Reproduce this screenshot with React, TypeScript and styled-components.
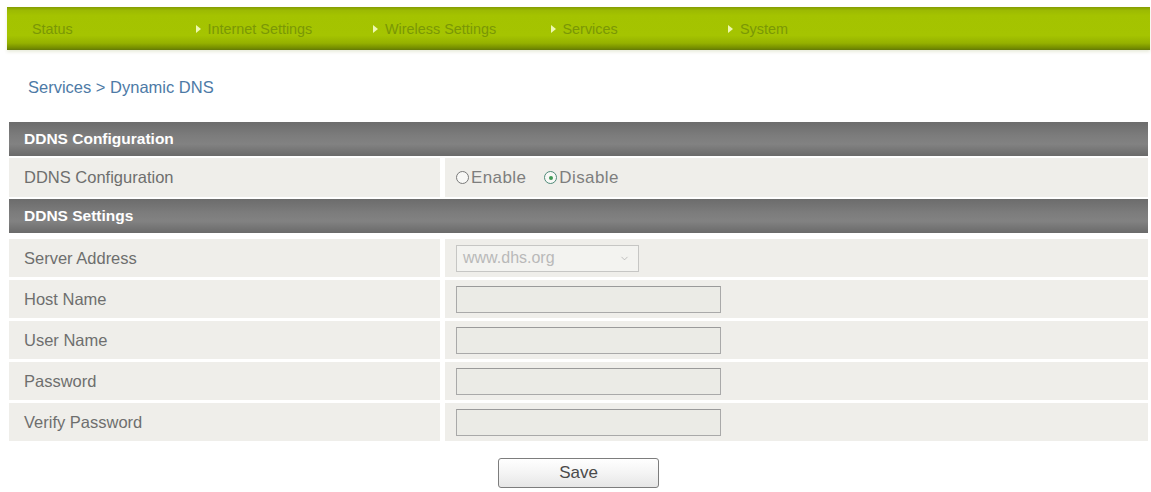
import React from 'react';
import styled, { createGlobalStyle } from 'styled-components';
import { ChevronDown } from 'lucide-react';

const GlobalStyle = createGlobalStyle`
    html, body {
        margin: 0;
        padding: 0;
        background: #ffffff;
        font-family: 'Liberation Sans', Arial, sans-serif;
    }
`;

const navItems = [
    { label: 'Status', arrow: false },
    { label: 'Internet Settings', arrow: true },
    { label: 'Wireless Settings', arrow: true },
    { label: 'Services', arrow: true },
    { label: 'System', arrow: true },
];

const settingsRows = ['Host Name', 'User Name', 'Password', 'Verify Password'];

const App: React.FC = () => {
    return (
        <>
            <GlobalStyle />
            <Page>
                <NavBar>
                    {navItems.map((item) => (
                        <NavItem key={item.label} $plain={!item.arrow}>
                            {item.arrow && <NavArrow />}
                            {item.label}
                        </NavItem>
                    ))}
                </NavBar>

                <Breadcrumb>Services &gt; Dynamic DNS</Breadcrumb>

                <Panel>
                    <SectionHeader>DDNS Configuration</SectionHeader>
                    <Row>
                        <LabelCell>DDNS Configuration</LabelCell>
                        <ValueCell>
                            <RadioOption>
                                <RadioDot $checked={false} />
                                Enable
                            </RadioOption>
                            <RadioOption>
                                <RadioDot $checked />
                                Disable
                            </RadioOption>
                        </ValueCell>
                    </Row>

                    <SectionHeader>DDNS Settings</SectionHeader>
                    <SettingsList>
                        <Row $compact>
                            <LabelCell>Server Address</LabelCell>
                            <ValueCell>
                                <FakeSelect>
                                    www.dhs.org
                                    <ChevronDown size={11} strokeWidth={1.5} color="#a8a8a8" />
                                </FakeSelect>
                            </ValueCell>
                        </Row>
                        {settingsRows.map((label) => (
                            <Row $compact key={label}>
                                <LabelCell>{label}</LabelCell>
                                <ValueCell>
                                    <TextField
                                        disabled
                                        type={label.includes('Password') ? 'password' : 'text'}
                                    />
                                </ValueCell>
                            </Row>
                        ))}
                    </SettingsList>

                    <Actions>
                        <SaveButton>Save</SaveButton>
                    </Actions>
                </Panel>
            </Page>
        </>
    );
};

const Page = styled.div`
    padding: 7px 1px 0 7px;
`;

const NavBar = styled.div`
    display: flex;
    align-items: center;
    height: 43px;
    padding-left: 11px;
    background: linear-gradient(
        to bottom,
        #849c02 0%,
        #9cba02 8%,
        #a4c300 20%,
        #a5c401 66%,
        #95b100 84%,
        #738b00 96%,
        #62780a 100%
    );
    box-shadow: 0 2px 3px rgba(170, 180, 120, 0.25);
`;

const NavItem = styled.div<{ $plain: boolean }>`
    display: flex;
    align-items: center;
    width: 177.5px;
    flex-shrink: 0;
    padding-left: ${(props) => (props.$plain ? '14px' : '0')};
    box-sizing: border-box;
    font-size: 14.4px;
    color: #7a9706;
    white-space: nowrap;
`;

const NavArrow = styled.span`
    width: 0;
    height: 0;
    margin-right: 7px;
    border-top: 4px solid transparent;
    border-bottom: 4px solid transparent;
    border-left: 5px solid #eef8b0;
`;

const Breadcrumb = styled.div`
    margin: 27px 0 0 21px;
    height: 20px;
    line-height: 20px;
    font-size: 16.5px;
    color: #4d7aa6;
`;

const Panel = styled.div`
    display: flex;
    flex-direction: column;
    gap: 2px;
    width: 1139px;
    margin: 25px 0 0 2px;
`;

const SectionHeader = styled.div`
    display: flex;
    align-items: center;
    height: 34px;
    padding-left: 15px;
    font-size: 15.5px;
    font-weight: bold;
    color: #ffffff;
    background: linear-gradient(to bottom, #6c6c6c 0%, #7c7c7c 40%, #828282 65%, #6a6a6a 100%);
`;

const SettingsList = styled.div`
    display: flex;
    flex-direction: column;
    gap: 3px;
    margin-top: 4px;
`;

const Row = styled.div<{ $compact?: boolean }>`
    display: grid;
    grid-template-columns: 431px 1fr;
    column-gap: 5px;
    height: ${(props) => (props.$compact ? '38px' : '39px')};
`;

const LabelCell = styled.div`
    display: flex;
    align-items: center;
    padding-left: 15px;
    background: #efeeea;
    font-size: 16.5px;
    color: #6e6e6e;
`;

const ValueCell = styled.div`
    display: flex;
    align-items: center;
    gap: 18px;
    padding-left: 11px;
    background: #efeeea;
`;

const RadioOption = styled.label`
    display: flex;
    align-items: center;
    gap: 2px;
    font-size: 17px;
    letter-spacing: 0.4px;
    color: #7e7e7e;
`;

const RadioDot = styled.span<{ $checked: boolean }>`
    position: relative;
    width: 11px;
    height: 11px;
    border-radius: 50%;
    border: 1.5px solid ${(props) => (props.$checked ? '#4f8a78' : '#7a7a7a')};
    background: #f8f8f6;
    &::after {
        content: '';
        display: ${(props) => (props.$checked ? 'block' : 'none')};
        position: absolute;
        left: 3.5px;
        top: 3.5px;
        width: 4px;
        height: 4px;
        border-radius: 50%;
        background: #3f9a55;
    }
`;

const FakeSelect = styled.div`
    display: flex;
    align-items: center;
    justify-content: space-between;
    width: 183px;
    height: 27px;
    box-sizing: border-box;
    padding: 0 8px 0 6px;
    border: 1px solid #c6c6c4;
    background: #f3f3f0;
    font-size: 16px;
    color: #b9b9b9;
`;

const TextField = styled.input`
    width: 265px;
    height: 27px;
    box-sizing: border-box;
    border: 1px solid #a9a9a9;
    border-top-color: #9a9a9a;
    background: #ebebe6;
    padding: 0 4px;
`;

const Actions = styled.div`
    display: flex;
    justify-content: center;
    margin-top: 15px;
`;

const SaveButton = styled.button`
    width: 161px;
    height: 30px;
    border: 1px solid #7d7d7d;
    border-radius: 3px;
    background: linear-gradient(to bottom, #ffffff 0%, #f4f4f4 50%, #e6e6e6 100%);
    font-family: 'Liberation Sans', Arial, sans-serif;
    font-size: 17px;
    color: #4a4a4a;
    cursor: pointer;
`;

export default App;
